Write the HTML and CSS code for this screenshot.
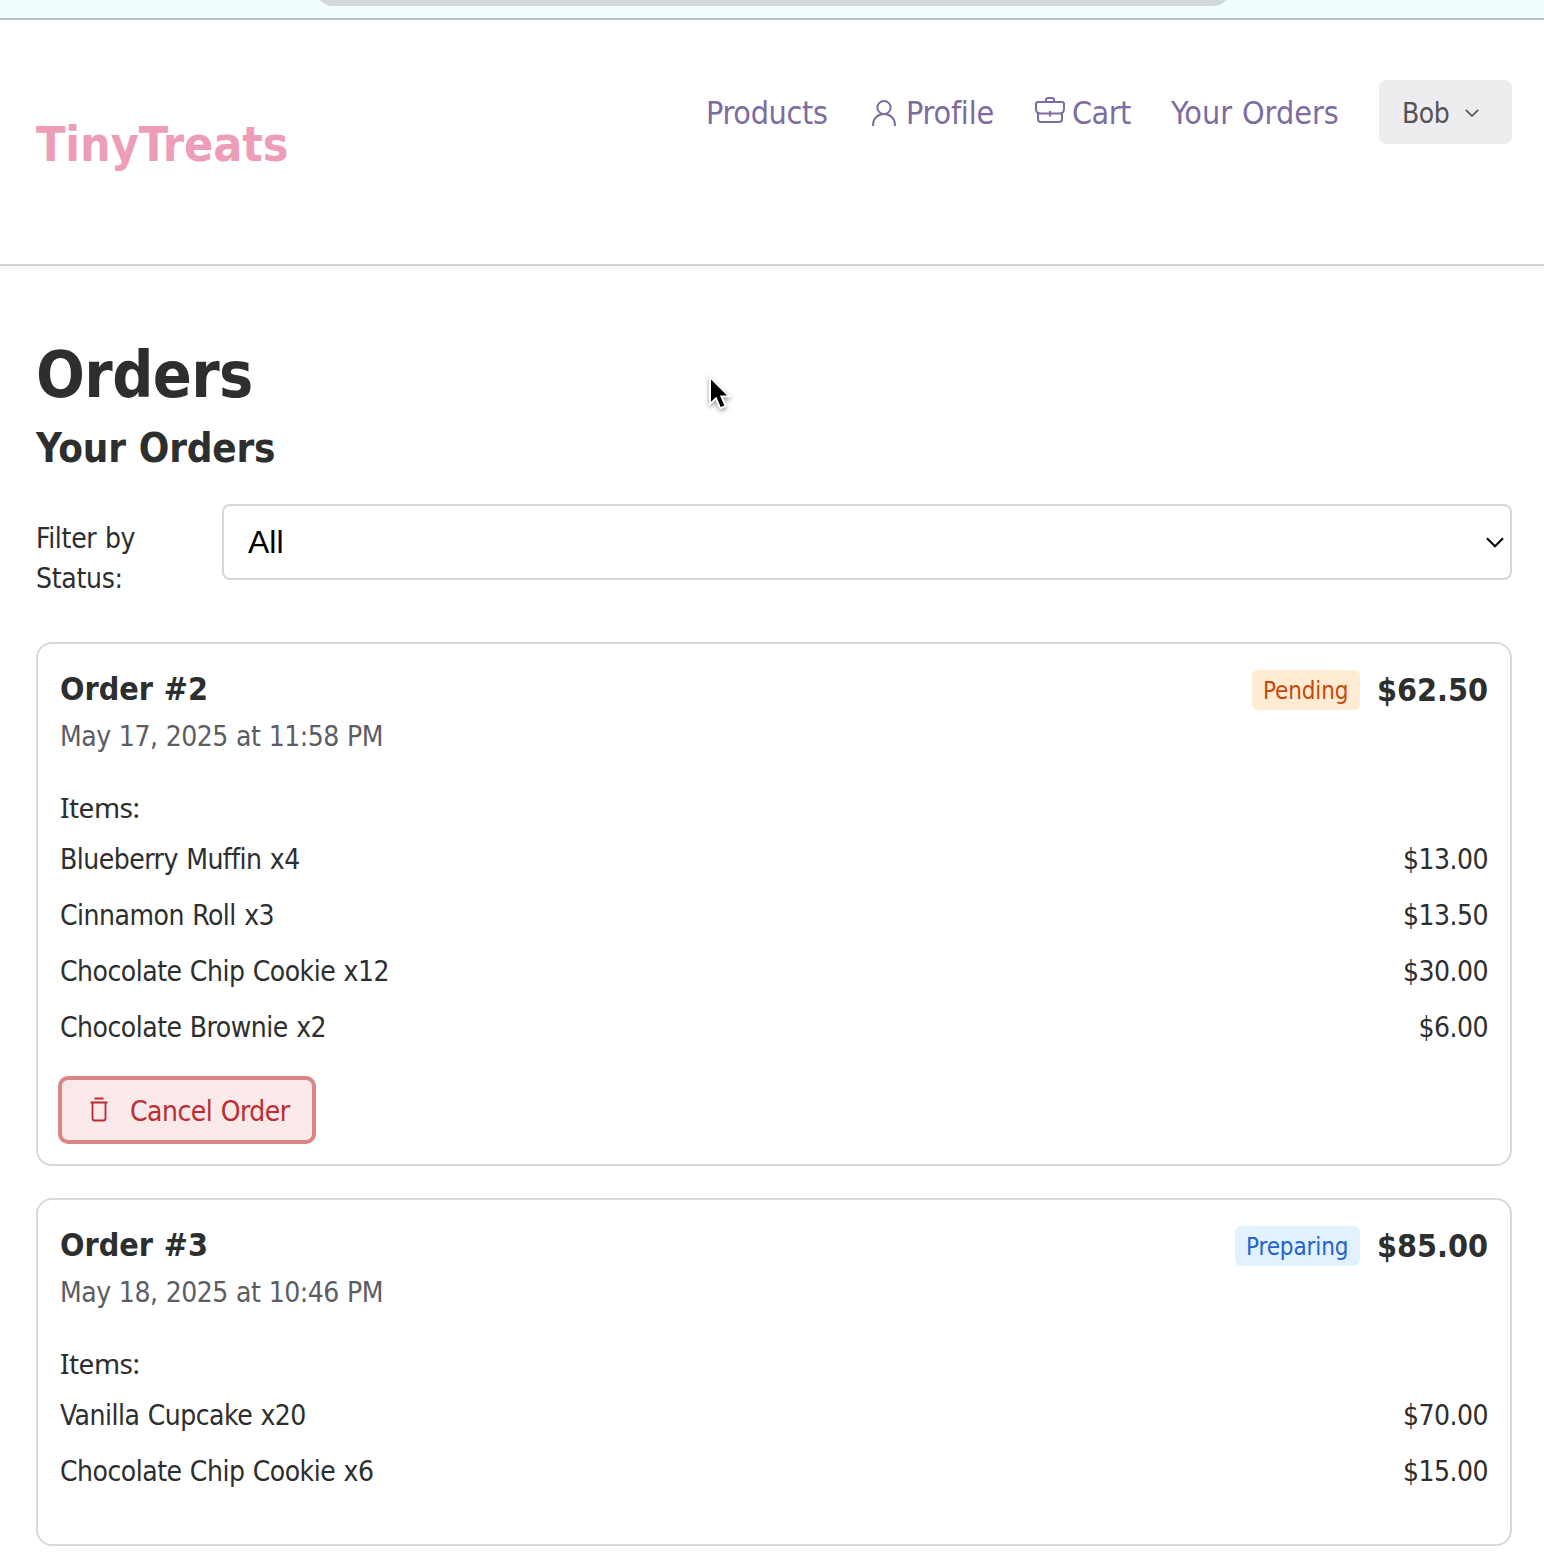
FILE: index.html
```html
<!DOCTYPE html>
<html lang="en">
<head>
<meta charset="utf-8">
<title>TinyTreats - Orders</title>
<link rel="stylesheet" href="styles.css">
</head>
<body>
<div class="browser-bar"><div class="address"></div></div>
<header class="header">
  <a class="logo">TinyTreats</a>
  <nav class="nav">
    <a class="nav-products">Products</a>
    <a class="nav-profile"><svg width="26" height="28" viewBox="0 0 26 28"><circle cx="13" cy="8.5" r="6.6"/><path d="M2.1 27v-1.600C2.100 19.500 7 15 13 15s10.900 4.500 10.900 10.400V27"/></svg><span>Profile</span></a>
    <a class="nav-cart"><svg width="30" height="28" viewBox="0 0 30 28"><path d="M3 6h24q2 0 2 2v5q0 4.500-4.700 4.500H5.700Q1 17.500 1 13V8q0-2 2-2zM3 17v6q0 3 3 3h18q3 0 3-3V17M11 6V4q0-2 2-2h4q2 0 2 2V6M15 15v5.500"/></svg><span>Cart</span></a>
    <a class="nav-orders">Your Orders</a>
    <button class="user"><span>Bob</span><svg width="14" height="8" viewBox="0 0 14 8"><path d="M.8.800 7 7 13.200.8"/></svg></button>
  </nav>
</header>
<main class="main">
  <h1>Orders</h1>
  <h2>Your Orders</h2>
  <div class="filter">
    <label>Filter by Status:</label>
    <div class="select"><span>All</span><svg width="18" height="11" viewBox="0 0 18 11"><path d="M1 1.200 9 9.300l8-8.100"/></svg></div>
  </div>
  <section class="card">
    <div class="card-head">
      <div><h3>Order #2</h3><p class="date">May 17, 2025 at 11:58 PM</p></div>
      <div class="summary"><span class="badge pending">Pending</span><strong>$62.50</strong></div>
    </div>
    <p class="items-label">Items:</p>
    <ul>
      <li><span>Blueberry Muffin x4</span><span class="price">$13.00</span></li>
      <li><span>Cinnamon Roll x3</span><span class="price">$13.50</span></li>
      <li><span>Chocolate Chip Cookie x12</span><span class="price">$30.00</span></li>
      <li><span>Chocolate Brownie x2</span><span class="price">$6.00</span></li>
    </ul>
    <button class="cancel"><svg width="18" height="26" viewBox="0 0 18 26"><path d="M4.500 1.500h9M.5 5.500h17M2.500 5.500v16q0 2 2 2h9q2 0 2-2v-16"/></svg><span>Cancel Order</span></button>
  </section>
  <section class="card card-short">
    <div class="card-head">
      <div><h3>Order #3</h3><p class="date">May 18, 2025 at 10:46 PM</p></div>
      <div class="summary"><span class="badge preparing">Preparing</span><strong>$85.00</strong></div>
    </div>
    <p class="items-label">Items:</p>
    <ul>
      <li><span>Vanilla Cupcake x20</span><span class="price">$70.00</span></li>
      <li><span>Chocolate Chip Cookie x6</span><span class="price">$15.00</span></li>
    </ul>
  </section>
</main>
<svg class="pointer" width="34" height="44" viewBox="0 0 34 44"><path d="M5 4v27l6-5.500 4.200 9.800 5.500-2.300-4.200-9.400h8z"/></svg>
</body>
</html>
```
FILE: styles.css
```css
* { box-sizing: border-box; }
body {
  margin: 0;
  height: 1566px;
  overflow: hidden;
  background: #fff;
  color: #2d2e2e;
  font-family: Tahoma, "DejaVu Sans Condensed", "DejaVu Sans", sans-serif;
  font-stretch: 75%;
  font-size: 28px;
  line-height: 40px;
  letter-spacing: -0.5px;
  word-spacing: 0.8px;
}
h1, h2, h3, p, ul { margin: 0; padding: 0; }
ul { list-style: none; }
button { font: inherit; letter-spacing: inherit; word-spacing: inherit; }
svg { fill: none; stroke: currentColor; stroke-width: 2; flex: none; }

.browser-bar {
  height: 20px;
  overflow: hidden;
  background: #f0fffe;
  border-bottom: 2px solid #b4c3c5;
}
.address {
  width: 916px;
  height: 36px;
  margin: -30px 0 0 315px;
  border-radius: 28px;
  background: #d2d9da;
}

.header {
  display: flex;
  justify-content: space-between;
  height: 246px;
  padding: 60px 32px 0 36px;
  border-bottom: 2px solid #d0d1d5;
  box-shadow: 0 2px 4px rgba(0, 0, 0, 0.05);
}
.logo {
  padding-top: 32px;
  font-size: 48px;
  font-weight: 700;
  line-height: 64px;
  letter-spacing: -0.1px;
  color: #ee9db9;
}
.nav { display: flex; align-items: flex-start; font-size: 32px; color: #7c6ca0; }
.nav a { display: flex; height: 64px; align-items: center; padding-top: 2px; }
.nav-products { width: 165px; letter-spacing: -0.3px; }
.nav-profile { width: 164px; gap: 9px; letter-spacing: -0.2px; }
.nav-profile svg { margin-bottom: 1px; }
.nav-cart { width: 136px; gap: 7px; }
.nav-cart svg { margin-bottom: 7px; }
.nav-orders { width: 208px; letter-spacing: 0; }
.user {
  display: flex;
  align-items: center;
  width: 133px;
  height: 64px;
  padding: 2px 0 0 23px;
  gap: 16px;
  border: 0;
  border-radius: 8px;
  background: #ededef;
  color: #535455;
  font-size: 28px;
}
.user span, .cancel span { padding-top: 2px; }
.user svg { stroke-width: 1.7; }

.main { padding: 69px 32px 0 36px; }
h1 { font-size: 64px; line-height: 80px; letter-spacing: -0.6px; }
h2 { margin-top: 5px; font-size: 40px; line-height: 56px; letter-spacing: -0.2px; }
.filter { display: flex; margin-top: 28px; }
.filter label { width: 186px; padding: 15px 60px 0 0; margin-bottom: -1px; letter-spacing: -0.3px; }
.select {
  display: flex;
  flex: 1;
  align-items: center;
  justify-content: space-between;
  height: 76px;
  padding: 0 6px 0 24px;
  border: 2px solid #d6d6d7;
  border-radius: 8px;
  color: #000;
  font-family: "Liberation Sans", Arial, sans-serif;
  font-size: 32px;
  letter-spacing: 0;
}

.card {
  height: 524px;
  margin-top: 44px;
  padding: 25px 22px 0;
  border: 2px solid #d8d9de;
  border-radius: 16px;
}
.card-short { height: 348px; margin-top: 32px; }
.card-head { display: flex; justify-content: space-between; height: 118px; }
h3 { font-size: 32px; line-height: 40px; letter-spacing: 0; }
.date { margin-top: 8px; color: #5b5d65; }
.summary { display: flex; gap: 17px; align-items: flex-start; padding-top: 1px; }
.summary strong { font-size: 32px; letter-spacing: 0; }
.badge {
  height: 40px;
  padding: 1px 0 0 11px;
  border-radius: 6px;
  font-size: 24px;
  letter-spacing: -0.1px;
}
.pending { width: 108px; background: #feebd2; color: #c54a09; }
.preparing { width: 125px; background: #e2f2fc; color: #2462d3; }
.items-label { font-family: Tahoma, "Noto Sans", sans-serif; }
ul { margin-top: 5px; }
li { display: flex; justify-content: space-between; line-height: 56px; }
.price { letter-spacing: -0.5px; }
.cancel {
  display: flex;
  align-items: center;
  width: 258px;
  height: 68px;
  margin: 20px 0 0 -2px;
  padding: 2px 0 0 28px;
  gap: 22px;
  border: 4px solid #db8586;
  border-radius: 10px;
  background: #fae9e9;
  color: #be2b32;
}
.cancel svg { margin-bottom: 2px; stroke-width: 1.8; }

.pointer {
  position: absolute;
  left: 705px;
  top: 373px;
  fill: #000;
  stroke: #fff;
  filter: drop-shadow(0 2px 2px rgba(0, 0, 0, 0.4));
}
```
